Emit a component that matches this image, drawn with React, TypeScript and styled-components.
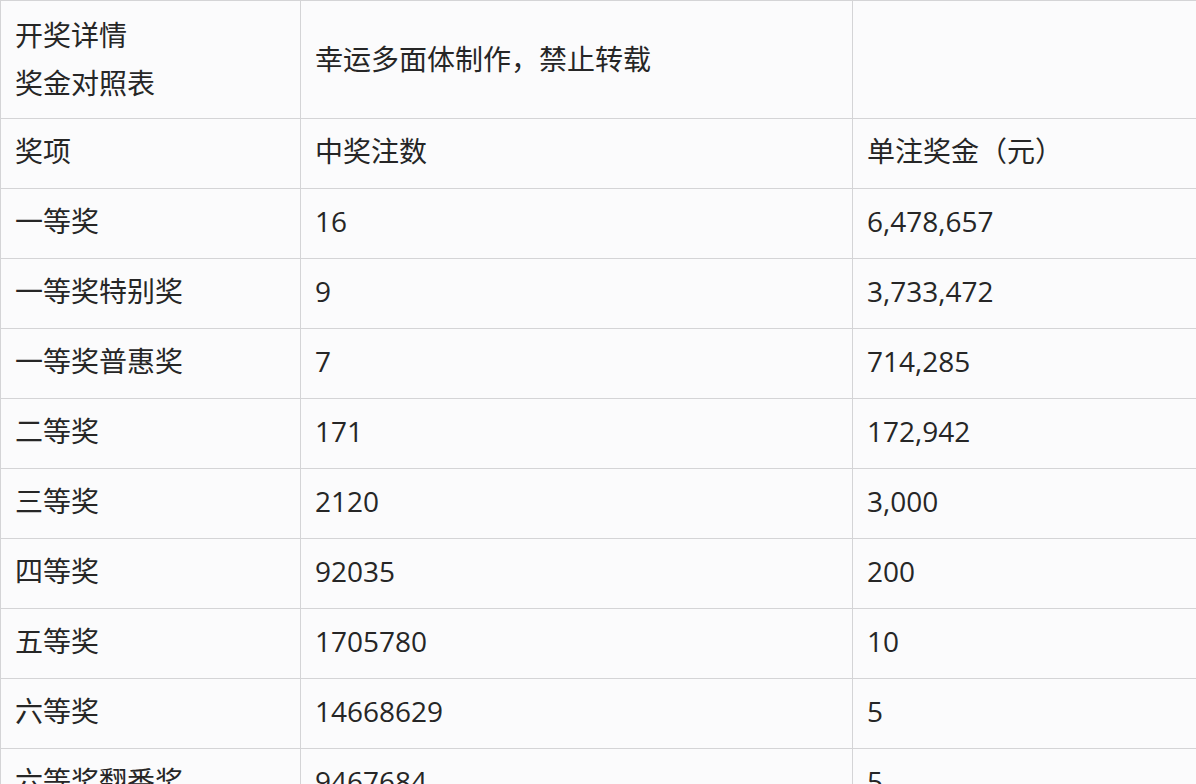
import React from "react";
import styled, { createGlobalStyle } from "styled-components";

const Global = createGlobalStyle`
  html, body { margin: 0; padding: 0; background: #fbfbfc; }
  body { font-family: "Open Sans", "Noto Sans CJK SC", sans-serif; color: #222; }
`;

const Table = styled.table`
  border-collapse: collapse;
  width: 1196px;
  table-layout: fixed;
  background: #fbfbfc;
`;

const Cell = styled.td<{ $tall?: boolean }>`
  border: 1px solid #d4d4d6;
  height: ${(p) => (p.$tall ? 118 : 70)}px;
  padding: ${(p) => (p.$tall ? "0 14px 1px" : "0 14px 5px")};
  font-family: "Open Sans", "Noto Sans CJK SC", sans-serif;
  font-size: 28px;
  line-height: 48px;
  vertical-align: middle;
  color: #262626;
  box-sizing: border-box;
  white-space: nowrap;
`;

const rows: [string, string, string][] = [
  ["奖项", "中奖注数", "单注奖金（元）"],
  ["一等奖", "16", "6,478,657"],
  ["一等奖特别奖", "9", "3,733,472"],
  ["一等奖普惠奖", "7", "714,285"],
  ["二等奖", "171", "172,942"],
  ["三等奖", "2120", "3,000"],
  ["四等奖", "92035", "200"],
  ["五等奖", "1705780", "10"],
  ["六等奖", "14668629", "5"],
  ["六等奖翻番奖", "9467684", "5"],
];

export default function App() {
  return (
    <>
      <Global />
      <Table>
        <colgroup>
          <col style={{ width: 300 }} />
          <col style={{ width: 552 }} />
          <col style={{ width: 344 }} />
        </colgroup>
        <tbody>
          <tr>
            <Cell $tall>
              开奖详情
              <br />
              奖金对照表
            </Cell>
            <Cell $tall>幸运多面体制作，禁止转载</Cell>
            <Cell $tall></Cell>
          </tr>
          {rows.map((r, i) => (
            <tr key={i}>
              <Cell>{r[0]}</Cell>
              <Cell>{r[1]}</Cell>
              <Cell>{r[2]}</Cell>
            </tr>
          ))}
        </tbody>
      </Table>
    </>
  );
}
